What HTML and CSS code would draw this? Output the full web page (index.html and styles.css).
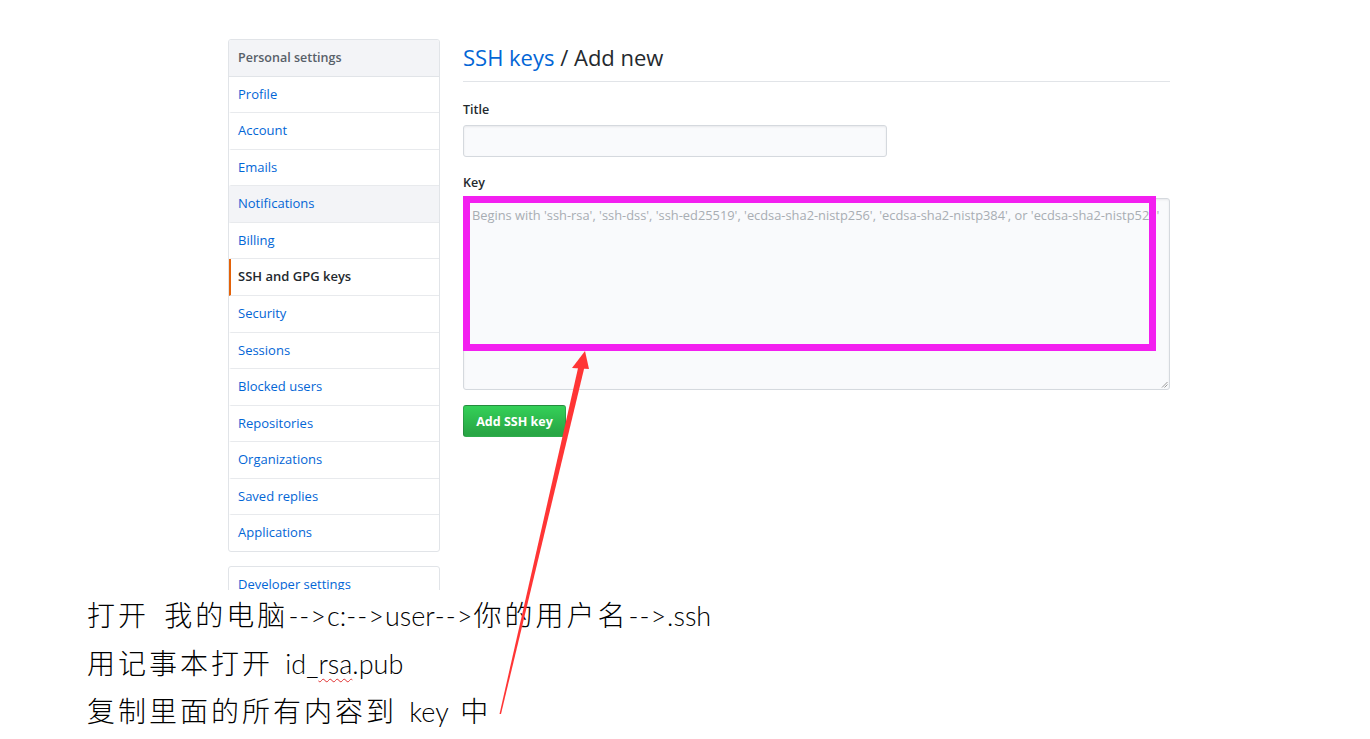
FILE: index.html
```html
<!DOCTYPE html>
<html lang="zh-CN">
<head>
<meta charset="utf-8">
<title>SSH keys / Add new</title>
<link rel="stylesheet" href="styles.css">
</head>
<body>
<div class="shot">
  <div class="layout">
    <nav class="side">
      <div class="menu">
        <div class="menu-head">Personal settings</div>
        <a class="item">Profile</a>
        <a class="item">Account</a>
        <a class="item">Emails</a>
        <a class="item hover">Notifications</a>
        <a class="item">Billing</a>
        <a class="item selected">SSH and GPG keys</a>
        <a class="item">Security</a>
        <a class="item">Sessions</a>
        <a class="item">Blocked users</a>
        <a class="item">Repositories</a>
        <a class="item">Organizations</a>
        <a class="item">Saved replies</a>
        <a class="item last">Applications</a>
      </div>
      <div class="menu dev">
        <a class="item last">Developer settings</a>
      </div>
    </nav>
    <main class="main">
      <h2 class="subhead"><a class="crumb">SSH keys</a> / Add new</h2>
      <div class="label">Title</div>
      <div class="input"></div>
      <div class="label key-label">Key</div>
      <div class="textarea">
        <div class="ph">Begins with 'ssh-rsa', 'ssh-dss', 'ssh-ed25519', 'ecdsa-sha2-nistp256', 'ecdsa-sha2-nistp384', or 'ecdsa-sha2-nistp521'</div>
        <svg class="grip" width="7" height="7" viewBox="0 0 7 7"><path d="M6.5 1 L1 6.5 M6.5 3.5 L3.5 6.5" stroke="#9a9a9a" stroke-width="1" fill="none"/></svg>
      </div>
      <button class="btn">Add SSH key</button>
    </main>
  </div>
</div>
<div class="notes">
  <div class="line"><span class="cjk gap">打开</span> <span class="cjk">我的电脑</span><span class="arr">--&gt;</span>c:<span class="arr">--&gt;</span>user<span class="arr">--&gt;</span><span class="cjk">你的用户名</span><span class="arr">--&gt;</span>.ssh</div>
  <div class="line"><span class="cjk">用记事本打开</span> id_<span class="spell">rsa</span>.pub</div>
  <div class="line"><span class="cjk">复制里面的所有内容到</span> key <span class="cjk">中</span></div>
</div>
<svg class="annot" width="1370" height="739" viewBox="0 0 1370 739">
  <rect x="466.5" y="199.5" width="686" height="148" fill="none" stroke="#f31ff0" stroke-width="7"/>
  <polygon points="585,351 572,368 589,369" fill="#ff3535"/>
  <polygon points="578.5,366 584.5,367 501,714 499.5,714" fill="#ff3535"/>
</svg>
</body>
</html>
```

FILE: styles.css
```css
* { box-sizing: border-box; }
html, body { margin: 0; padding: 0; background: #fff; }
body {
  width: 1370px;
  height: 739px;
  position: relative;
  overflow: hidden;
  font-family: "Open Sans", "Noto Sans", sans-serif;
  color: #24292e;
}
.shot {
  height: 590px;
  overflow: hidden;
}
.layout {
  display: flex;
  gap: 23px;
  padding: 39px 0 0 228px;
}
.side {
  width: 212px;
  flex: none;
  display: flex;
  flex-direction: column;
  gap: 14px;
}
.menu {
  border: 1px solid #e1e4e8;
  border-radius: 3px;
  background: #fff;
  display: flex;
  flex-direction: column;
  overflow: hidden;
}
.menu-head {
  background: #f3f4f7;
  color: #586069;
  font-size: 12.5px;
  font-weight: 600;
  line-height: 19.57px;
  padding: 8px 9px;
  border-bottom: 1px solid #e1e4e8;
}
.item {
  display: block;
  color: #0366d6;
  font-size: 13px;
  line-height: 19.57px;
  padding: 8px 7px;
  border-bottom: 1px solid #e8eaed;
  border-left: 2px solid transparent;
  text-decoration: none;
}
.item.last { border-bottom: none; }
.item.hover { background: #f3f4f7; }
.item.selected {
  color: #24292e;
  font-weight: 600;
  border-left-color: #e36209;
}
.main {
  width: 707px;
  flex: none;
}
.subhead {
  margin: 0 0 19px;
  padding: 3px 0 9px;
  border-bottom: 1px solid #e1e4e8;
  font-size: 22px;
  font-weight: 400;
  line-height: 30px;
  color: #24292e;
}
.crumb { color: #0366d6; }
.label {
  font-size: 12.5px;
  font-weight: 600;
  line-height: 18px;
  margin-bottom: 6px;
}
.key-label { margin-top: 17px; }
.input {
  width: 424px;
  height: 32px;
  background: #f9fafc;
  border: 1px solid #d5d9de;
  border-radius: 3px;
  box-shadow: inset 0 1px 2px rgba(27,31,35,.075);
}
.textarea {
  position: relative;
  width: 707px;
  height: 192px;
  background: #f9fafc;
  border: 1px solid #d5d9de;
  border-radius: 3px;
  box-shadow: inset 0 1px 2px rgba(27,31,35,.075);
  padding: 7px 8px;
  overflow: hidden;
}
.ph {
  white-space: nowrap;
  font-size: 12.85px;
  line-height: 18px;
  color: #a8adb3;
}
.grip {
  position: absolute;
  right: 1px;
  bottom: 1px;
}
.btn {
  display: block;
  margin-top: 15px;
  width: 103px;
  height: 32px;
  border: 1px solid rgba(27,31,35,.2);
  border-radius: 3px;
  background: linear-gradient(#34d058, #28a745 90%);
  color: #fff;
  font-family: "Open Sans", "Noto Sans", sans-serif;
  font-size: 12.5px;
  font-weight: 700;
  padding: 0;
}
.notes {
  padding: 1px 0 0 87px;
  font-family: "Lato", "Noto Sans CJK SC", sans-serif;
  font-size: 27px;
  font-weight: 300;
  line-height: 46px;
  word-spacing: 5px;
  color: #000;
}
.line { white-space: nowrap; }
.cjk {
  font-family: "Noto Sans CJK SC", sans-serif;
  font-weight: 300;
  font-size: 28px;
  letter-spacing: 3px;
}
.gap { margin-right: 3px; }
.arr { letter-spacing: 1px; }
.spell {
  text-decoration: underline wavy #e03030;
  text-decoration-thickness: 1px;
  text-underline-offset: 4px;
}
.annot {
  position: absolute;
  left: 0;
  top: 0;
  pointer-events: none;
}
```
